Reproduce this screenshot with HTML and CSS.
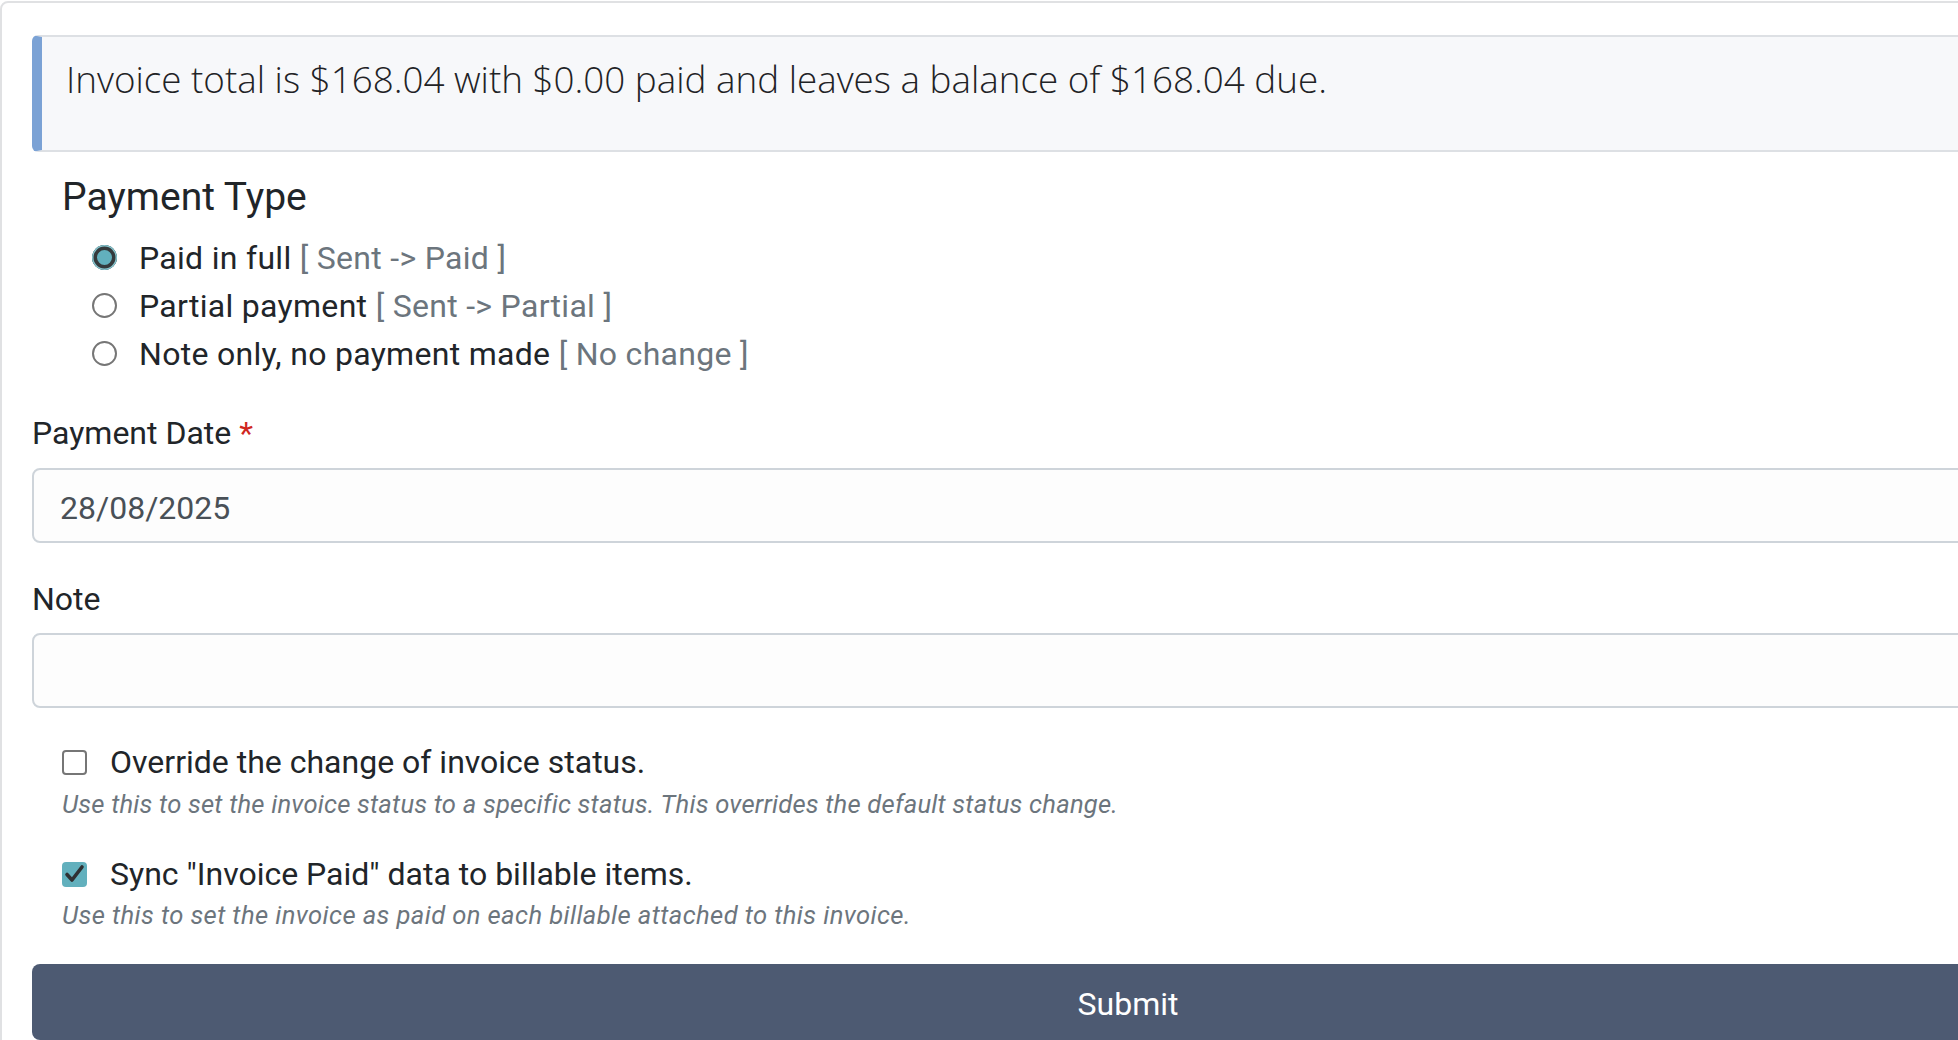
FILE: index.html
```html
<!DOCTYPE html>
<html lang="en">
<head>
<meta charset="utf-8">
<title>Record Payment</title>
<link rel="stylesheet" href="styles.css">
</head>
<body>
<div class="card">
  <div class="alert">Invoice total is $168.04 with $0.00 paid and leaves a balance of $168.04 due.</div>

  <section class="payment-type">
    <h5 class="legend">Payment Type</h5>
    <div class="radio-list">
      <label class="radio-row"><span class="radio checked"></span><span>Paid in full <span class="muted">[ Sent -&gt; Paid ]</span></span></label>
      <label class="radio-row"><span class="radio"></span><span>Partial payment <span class="muted">[ Sent -&gt; Partial ]</span></span></label>
      <label class="radio-row"><span class="radio"></span><span>Note only, no payment made <span class="muted">[ No change ]</span></span></label>
    </div>
  </section>

  <label class="field-label first">Payment Date <span class="required">*</span></label>
  <input class="form-control" type="text" value="28/08/2025">

  <label class="field-label second">Note</label>
  <input class="form-control" type="text" value="">

  <div class="check-row override"><span class="checkbox"></span><span>Override the change of invoice status.</span></div>
  <div class="help first-help">Use this to set the invoice status to a specific status. This overrides the default status change.</div>

  <div class="check-row sync"><span class="checkbox checked"><svg viewBox="0 0 25 25" width="25" height="25"><path d="M5 12.5 L10 18 L20 5" fill="none" stroke="#2f3133" stroke-width="3.6" stroke-linecap="round" stroke-linejoin="round"/></svg></span><span>Sync "Invoice Paid" data to billable items.</span></div>
  <div class="help second-help">Use this to set the invoice as paid on each billable attached to this invoice.</div>

  <button class="submit" type="button">Submit</button>
</div>
</body>
</html>
```
FILE: styles.css
```css
html, body {
  margin: 0;
  padding: 0;
  overflow: hidden;
  background: #ffffff;
}

body {
  font-family: Roboto, "Noto Sans", sans-serif;
  color: #212529;
  font-size: 32px;
  line-height: 48px;
}

.card {
  width: 2256px;
  box-sizing: border-box;
  margin-top: 1px;
  border: 2px solid #e0e1e3;
  border-radius: 8px;
  padding: 32px 30px 40px;
}

.alert {
  box-sizing: border-box;
  height: 117px;
  border: 2px solid #dde0e4;
  border-left: 10px solid #7ba2d5;
  border-radius: 6px;
  background: #f7f8fa;
  padding: 18px 24px 0;
  font-family: "Open Sans", Roboto, sans-serif;
  font-weight: 300;
  font-size: 36.8px;
  line-height: 48px;
  color: #1f2326;
  white-space: nowrap;
}

.payment-type {
  margin-top: 21px;
  padding-left: 30px;
}

.legend {
  margin: 0 0 12.7px;
  font-size: 39px;
  font-weight: 400;
  line-height: 48px;
}

.radio-list {
  display: flex;
  flex-direction: column;
  padding-left: 30px;
}

.radio-row {
  display: flex;
  align-items: center;
  height: 48px;
  letter-spacing: 0.3px;
  white-space: nowrap;
}

.radio {
  flex: none;
  box-sizing: border-box;
  width: 25px;
  height: 25px;
  border-radius: 50%;
  border: 2px solid #767676;
  background: #ffffff;
  margin-right: 22px;
}

.radio.checked {
  border: none;
  background: #62b0bd;
  box-shadow: inset 0 0 0 1.5px #86c3cc, inset 0 0 0 5px #343a3c;
}

.muted {
  color: #6c757d;
}

.field-label {
  display: block;
  margin-bottom: 11px;
}

.field-label.first {
  margin-top: 31px;
}

.field-label.second {
  margin-top: 32px;
  margin-bottom: 10px;
}

.required {
  color: #d0271f;
}

.form-control {
  display: block;
  box-sizing: border-box;
  width: 100%;
  height: 75px;
  margin: 0;
  border: 2px solid #ced4da;
  border-radius: 8px;
  padding: 5px 26px 0;
  font-family: Roboto, "Noto Sans", sans-serif;
  font-size: 32px;
  color: #495057;
  background: #fdfdfd;
  outline: none;
}

.check-row {
  display: flex;
  align-items: center;
  height: 48px;
  padding-left: 30px;
  white-space: nowrap;
}

.check-row.override {
  margin-top: 30.4px;
}

.check-row.sync {
  margin-top: 27.3px;
}

.checkbox {
  flex: none;
  box-sizing: border-box;
  width: 25px;
  height: 25px;
  border: 2px solid #767676;
  border-radius: 4px;
  background: #ffffff;
  margin-right: 23px;
  display: flex;
  align-items: center;
  justify-content: center;
}

.checkbox.checked {
  border: none;
  background: #62b0bd;
}

.checkbox svg {
  display: block;
}

.help {
  padding-left: 30px;
  font-size: 25.6px;
  line-height: 38.4px;
  font-style: italic;
  letter-spacing: 0.2px;
  color: #6c757d;
  white-space: nowrap;
}

.help.first-help {
  margin-top: -1.4px;
}

.help.second-help {
  margin-top: -2.7px;
  letter-spacing: 0.4px;
}

.submit {
  display: block;
  width: 100%;
  height: 76px;
  margin-top: 30.2px;
  border: none;
  border-radius: 8px;
  background: #4d5a72;
  color: #ffffff;
  font-family: Roboto, "Noto Sans", sans-serif;
  font-size: 32px;
  line-height: 72px;
  padding: 4px 0 0;
  text-align: center;
}
```
